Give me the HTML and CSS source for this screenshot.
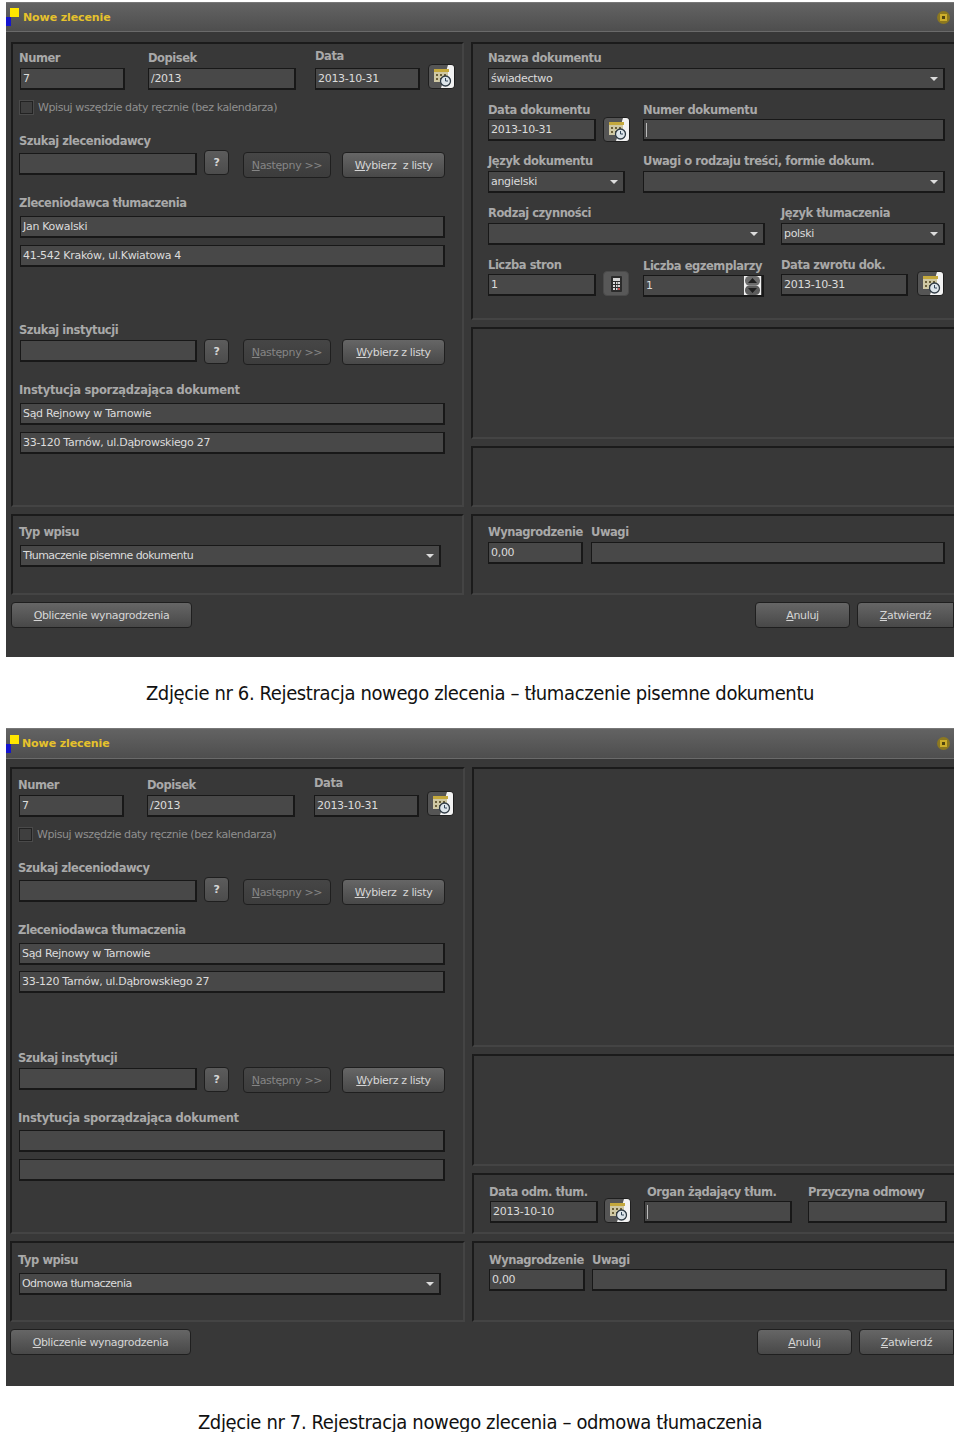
FILE: index.html
```html
<!DOCTYPE html>
<html lang="pl">
<head>
    <meta charset="UTF-8">
    <title>Rejestracja nowego zlecenia</title>
    <link rel="stylesheet" href="styles.css">
</head>
<body>
    <svg class="icon-defs" width="0" height="0">
        <symbol id="icon-calendar" viewBox="0 0 27 25">
            <path d="M20 1h6v23h-13z" fill="#f2f2f2"/>
            <rect x="6" y="5" width="15" height="3" fill="#c4a83c"/>
            <rect x="6" y="8" width="14" height="10" fill="#cfc8a4"/>
            <path d="M8 10h2v2H8zM12 10h2v2h-2zM16 10h2v2h-2zM8 14h2v2H8zM12 14h2v2h-2z" fill="#6a5f38"/>
            <circle cx="17.500" cy="17" r="5" fill="#dde5ea" stroke="#2e3a44" stroke-width="1.300"/>
            <path d="M17.500 14v3h2.500" fill="none" stroke="#33475a"/>
        </symbol>
    </svg>

    <!-- Zdjecie 6 -->
    <div class="window">
        <div class="title-bar">
            <span class="logo"></span>
            <span class="title-text">Nowe zlecenie</span>
            <span class="title-pin"></span>
        </div>
        <div class="panels">
            <div class="panel panel-left">
                <div class="row row-end">
                    <div class="field w-105">
                        <div class="label shift-left">Numer</div>
                        <div class="input">7</div>
                    </div>
                    <div class="field w-148 ml-23">
                        <div class="label">Dopisek</div>
                        <div class="input">/2013</div>
                    </div>
                    <div class="field w-105 ml-19">
                        <div class="label label-high">Data</div>
                        <div class="input">2013-10-31</div>
                    </div>
                    <button class="icon-btn ml-8 mb-1"><svg width="27" height="25"><use href="#icon-calendar"/></svg></button>
                </div>
                <div class="check-row">
                    <span class="checkbox"></span>
                    <span>Wpisuj wszędzie daty ręcznie (bez kalendarza)</span>
                </div>
                <div class="row row-end mt-19 shift-left">
                    <div class="field w-178 mb-3">
                        <div class="label gap-4">Szukaj zleceniodawcy</div>
                        <div class="input"></div>
                    </div>
                    <button class="btn-q ml-7 mb-3">?</button>
                    <button class="btn btn-off w-88 ml-14"><span><u>N</u>astępny &gt;&gt;</span></button>
                    <button class="btn w-103 ml-11"><span><u>W</u>ybierz&nbsp; z listy</span></button>
                </div>
                <div class="label mt-17 shift-left gap-5">Zleceniodawca tłumaczenia</div>
                <div class="input w-425">Jan Kowalski</div>
                <div class="input w-425 mt-7">41-542 Kraków, ul.Kwiatowa 4</div>
                <div class="row row-end mt-55">
                    <div class="field w-177 mb-3">
                        <div class="label shift-left">Szukaj instytucji</div>
                        <div class="input"></div>
                    </div>
                    <button class="btn-q ml-7 mb-1">?</button>
                    <button class="btn btn-off w-88 ml-14"><span><u>N</u>astępny &gt;&gt;</span></button>
                    <button class="btn w-103 ml-11"><span><u>W</u>ybierz z listy</span></button>
                </div>
                <div class="label label-wide mt-17 gap-5 shift-left">Instytucja sporządzająca dokument</div>
                <div class="input w-425">Sąd Rejnowy w Tarnowie</div>
                <div class="input w-425 mt-7">33-120 Tarnów, ul.Dąbrowskiego 27</div>
            </div>
            <div class="panel-stack">
                <div class="panel panel-doc">
                    <div class="field">
                        <div class="label">Nazwa dokumentu</div>
                        <div class="input select w-457">świadectwo</div>
                    </div>
                    <div class="row row-end mt-12">
                        <div class="field w-108 mb-1">
                            <div class="label gap-1">Data dokumentu</div>
                            <div class="input">2013-10-31</div>
                        </div>
                        <button class="icon-btn ml-7"><svg width="27" height="25"><use href="#icon-calendar"/></svg></button>
                        <div class="field w-302 ml-13 mb-1">
                            <div class="label gap-1">Numer dokumentu</div>
                            <div class="input"><span class="caret"></span></div>
                        </div>
                    </div>
                    <div class="row mt-11">
                        <div class="field w-137">
                            <div class="label">Język dokumentu</div>
                            <div class="input select">angielski</div>
                        </div>
                        <div class="field w-302 ml-18">
                            <div class="label">Uwagi o rodzaju treści, formie dokum.</div>
                            <div class="input select"></div>
                        </div>
                    </div>
                    <div class="row mt-12">
                        <div class="field w-277">
                            <div class="label">Rodzaj czynności</div>
                            <div class="input select"></div>
                        </div>
                        <div class="field w-164 ml-16">
                            <div class="label">Język tłumaczenia</div>
                            <div class="input select">polski</div>
                        </div>
                    </div>
                    <div class="row row-end mt-12">
                        <div class="field w-108">
                            <div class="label gap-1">Liczba stron</div>
                            <div class="input">1</div>
                        </div>
                        <button class="icon-btn icon-btn-flat ml-7 w-26">
                            <svg width="26" height="25" viewBox="0 0 26 25">
                                <rect x="8" y="5" width="11" height="16" rx="1" fill="#2b2b2b"/>
                                <rect x="10" y="7" width="7" height="3" fill="#d4d4d4"/>
                                <path d="M10 11h2v2h-2zM13 11h1.500v2H13zM15 11h2v2h-2zM10 14h2v2h-2zM13 14h1.500v2H13zM15 14h2v2h-2z" fill="#d8d8d8"/>
                                <path d="M10 17h2v2h-2zM13 17h1.500v2H13z" fill="#d8d8d8"/>
                                <path d="M15 17h2v2h-2z" fill="#c04848"/>
                            </svg>
                        </button>
                        <div class="field w-121 ml-14">
                            <div class="label gap-1">Liczba egzemplarzy</div>
                            <div class="input input-low spinner">1
                                <svg class="spin-icon" width="17" height="19" viewBox="0 0 17 19">
                                    <rect width="17" height="19" fill="#f0f0f0"/>
                                    <rect x="1" y="0" width="15" height="9.500" rx="4.500" fill="#6c6c6c"/>
                                    <rect x="1" y="9.500" width="15" height="9.500" rx="4.500" fill="#5c5c5c"/>
                                    <path d="M8.500 2l4.500 5H4zM8.500 17l4.500-5H4z" fill="#1e1e1e"/>
                                </svg>
                            </div>
                        </div>
                        <div class="field w-127 ml-17">
                            <div class="label gap-1">Data zwrotu dok.</div>
                            <div class="input">2013-10-31</div>
                        </div>
                        <button class="icon-btn ml-9"><svg width="27" height="25"><use href="#icon-calendar"/></svg></button>
                    </div>
                </div>
                <div class="panel panel-mid"></div>
                <div class="panel panel-low"></div>
            </div>
        </div>
        <div class="panels panels-bottom">
            <div class="panel panel-left panel-type">
                <div class="label gap-5 shift-left">Typ wpisu</div>
                <div class="input select select-tight w-421">Tłumaczenie pisemne dokumentu</div>
            </div>
            <div class="panel panel-pay">
                <div class="row">
                    <div class="field w-95">
                        <div class="label">Wynagrodzenie</div>
                        <div class="input">0,00</div>
                    </div>
                    <div class="field w-354 ml-8">
                        <div class="label">Uwagi</div>
                        <div class="input"></div>
                    </div>
                </div>
            </div>
        </div>
        <div class="actions">
            <button class="btn w-181"><span><u>O</u>bliczenie wynagrodzenia</span></button>
            <button class="btn w-95 push-right"><span><u>A</u>nuluj</span></button>
            <button class="btn btn-clip w-97 ml-7"><span><u>Z</u>atwierdź</span></button>
        </div>
    </div>
    <p class="caption">Zdjęcie nr 6. Rejestracja nowego zlecenia – tłumaczenie pisemne dokumentu</p>

    <!-- Zdjecie 7 -->
    <div class="window window-second">
        <div class="title-bar">
            <span class="logo"></span>
            <span class="title-text">Nowe zlecenie</span>
            <span class="title-pin"></span>
        </div>
        <div class="panels">
            <div class="panel panel-left">
                <div class="row row-end">
                    <div class="field w-105">
                        <div class="label shift-left">Numer</div>
                        <div class="input">7</div>
                    </div>
                    <div class="field w-148 ml-23">
                        <div class="label">Dopisek</div>
                        <div class="input">/2013</div>
                    </div>
                    <div class="field w-105 ml-19">
                        <div class="label label-high">Data</div>
                        <div class="input">2013-10-31</div>
                    </div>
                    <button class="icon-btn ml-8 mb-1"><svg width="27" height="25"><use href="#icon-calendar"/></svg></button>
                </div>
                <div class="check-row">
                    <span class="checkbox"></span>
                    <span>Wpisuj wszędzie daty ręcznie (bez kalendarza)</span>
                </div>
                <div class="row row-end mt-19">
                    <div class="field w-178 mb-3">
                        <div class="label gap-4 shift-left">Szukaj zleceniodawcy</div>
                        <div class="input"></div>
                    </div>
                    <button class="btn-q ml-7 mb-3">?</button>
                    <button class="btn btn-off w-88 ml-14"><span><u>N</u>astępny &gt;&gt;</span></button>
                    <button class="btn w-103 ml-11"><span><u>W</u>ybierz&nbsp; z listy</span></button>
                </div>
                <div class="label mt-17 gap-5 shift-left">Zleceniodawca tłumaczenia</div>
                <div class="input w-426">Sąd Rejnowy w Tarnowie</div>
                <div class="input w-426 mt-6">33-120 Tarnów, ul.Dąbrowskiego 27</div>
                <div class="row row-end mt-57">
                    <div class="field w-178 mb-3">
                        <div class="label shift-left">Szukaj instytucji</div>
                        <div class="input"></div>
                    </div>
                    <button class="btn-q ml-7 mb-1">?</button>
                    <button class="btn btn-off w-88 ml-14"><span><u>N</u>astępny &gt;&gt;</span></button>
                    <button class="btn w-103 ml-11"><span><u>W</u>ybierz z listy</span></button>
                </div>
                <div class="label label-wide mt-17 gap-4 shift-left">Instytucja sporządzająca dokument</div>
                <div class="input w-426"></div>
                <div class="input w-426 mt-7"></div>
            </div>
            <div class="panel-stack">
                <div class="panel panel-doc"></div>
                <div class="panel panel-mid"></div>
                <div class="panel panel-low panel-refusal">
                    <div class="row row-end">
                        <div class="field w-108 mb-0">
                            <div class="label gap-1 shift-left">Data odm. tłum.</div>
                            <div class="input">2013-10-10</div>
                        </div>
                        <button class="icon-btn ml-6"><svg width="27" height="25"><use href="#icon-calendar"/></svg></button>
                        <div class="field w-148 ml-13">
                            <div class="label gap-1 label-inset">Organ żądający tłum.</div>
                            <div class="input"><span class="caret"></span></div>
                        </div>
                        <div class="field w-139 ml-16">
                            <div class="label gap-1">Przyczyna odmowy</div>
                            <div class="input"></div>
                        </div>
                    </div>
                </div>
            </div>
        </div>
        <div class="panels panels-bottom">
            <div class="panel panel-left panel-type">
                <div class="label gap-5 shift-left">Typ wpisu</div>
                <div class="input select select-tight w-422">Odmowa tłumaczenia</div>
            </div>
            <div class="panel panel-pay">
                <div class="row">
                    <div class="field w-96">
                        <div class="label gap-1">Wynagrodzenie</div>
                        <div class="input">0,00</div>
                    </div>
                    <div class="field w-355 ml-7">
                        <div class="label gap-1">Uwagi</div>
                        <div class="input"></div>
                    </div>
                </div>
            </div>
        </div>
        <div class="actions">
            <button class="btn w-181"><span><u>O</u>bliczenie wynagrodzenia</span></button>
            <button class="btn w-95 push-right"><span><u>A</u>nuluj</span></button>
            <button class="btn btn-clip w-95 ml-7"><span><u>Z</u>atwierdź</span></button>
        </div>
    </div>
    <p class="caption caption-second">Zdjęcie nr 7. Rejestracja nowego zlecenia – odmowa tłumaczenia</p>
</body>
</html>
```

FILE: styles.css
```css
body {
    margin: 0;
    padding: 2px 0 0 6px;
    background-color: #fff;
    font-family: "DejaVu Sans", sans-serif;
    overflow-x: hidden;
}

.icon-defs {
    position: absolute;
}

.window {
    width: 948px;
    height: 655px;
    background-color: #383838;
    overflow: hidden;
    box-sizing: border-box;
}

.window-second {
    height: 658px;
}

.title-bar {
    display: flex;
    align-items: center;
    height: 30px;
    box-sizing: border-box;
    padding-left: 17px;
    background: linear-gradient(#636363, #4e4e4e);
    border-top: 1px solid #777;
    border-bottom: 1px solid #6a6a6a;
}

.window-second .title-bar {
    height: 31px;
    padding-left: 16px;
}

.logo {
    position: absolute;
    left: 6px;
    width: 5px;
    height: 9px;
    margin-top: 9px;
    background-color: #1414d0;
}

.logo::after {
    content: "";
    position: absolute;
    left: 4px;
    top: -9px;
    width: 9px;
    height: 9px;
    background-color: #ffe600;
}

.title-text {
    color: #e6c22c;
    font-size: 11px;
    font-weight: bold;
    letter-spacing: -0.1px;
}

.title-pin {
    display: flex;
    align-items: center;
    justify-content: center;
    width: 13px;
    height: 13px;
    margin-left: auto;
    margin-right: 4px;
    border-radius: 50%;
    background-color: #8c7820;
}

.title-pin::after {
    content: "";
    width: 3px;
    height: 3px;
    border: 2px solid #cdae2c;
    background-color: #4f4410;
}

.panels {
    display: flex;
    gap: 7px;
    margin: 10px 0 0 5px;
}

.window-second .panels {
    margin: 8px 0 0 4px;
}

.window .panels-bottom,
.window-second .panels-bottom {
    margin-top: 7px;
}

.panel {
    flex: none;
    box-sizing: border-box;
    border: 2px solid #1b1b1b;
    border-right-color: #444;
    border-bottom-color: #444;
}

.panel-left {
    width: 453px;
    height: 465px;
    padding: 4px 0 0 7px;
}

.window-second .panel-left {
    width: 455px;
    height: 467px;
    padding-top: 6px;
}

.panel-stack {
    flex: none;
    display: flex;
    flex-direction: column;
    gap: 7px;
    width: 490px;
}

.panel-doc {
    height: 278px;
    padding: 6px 0 0 15px;
    border-right: 0;
}

.window-second .panel-doc {
    height: 280px;
}

.panel-mid {
    height: 112px;
    border-right: 0;
}

.panel-low {
    height: 61px;
    border-right: 0;
}

.panel-refusal {
    padding: 9px 0 0 16px;
}

.panels-bottom .panel-type {
    height: 81px;
    padding: 8px 0 0 7px;
}

.window-second .panels-bottom .panel-type {
    padding-top: 9px;
}

.panel-pay {
    width: 490px;
    height: 81px;
    padding: 8px 0 0 15px;
    border-right: 0;
}

.window-second .panel-pay {
    padding-top: 9px;
}

.row {
    display: flex;
}

.row-end {
    align-items: flex-end;
}

.field {
    flex: none;
}

.label {
    height: 16px;
    line-height: 16px;
    margin-bottom: 2px;
    color: #a9a9a9;
    font-size: 11.5px;
    font-weight: bold;
    letter-spacing: -0.45px;
    white-space: nowrap;
}

.label-high {
    margin-bottom: 4px;
}

.label-wide {
    letter-spacing: -0.28px;
}

.label-inset {
    padding-left: 3px;
}

.shift-left {
    margin-left: -1px;
}

.input {
    position: relative;
    height: 22px;
    box-sizing: border-box;
    padding-left: 2px;
    line-height: 19px;
    background-color: #484848;
    border: 1px solid #181818;
    border-width: 1px 2px 2px 1px;
    color: #dcdcdc;
    font-size: 11px;
    letter-spacing: -0.3px;
    white-space: nowrap;
}

.input-low {
    margin-top: 1px;
    margin-bottom: -1px;
}

.select::after {
    content: "";
    position: absolute;
    right: 5px;
    top: 8px;
    border-left: 4px solid transparent;
    border-right: 4px solid transparent;
    border-top: 4px solid #ddd;
}

.select-tight {
    letter-spacing: -0.55px;
}

.caret {
    display: inline-block;
    width: 1px;
    height: 14px;
    margin-top: 3px;
    background-color: #bbb;
}

.spin-icon {
    position: absolute;
    right: 1px;
    top: 0;
}

.check-row {
    display: flex;
    align-items: center;
    gap: 5px;
    height: 14px;
    margin-top: 10px;
    color: #8f8f8f;
    font-size: 11px;
    letter-spacing: -0.4px;
}

.checkbox {
    width: 11px;
    height: 11px;
    border: 1px solid #222;
    outline: 1px solid #4a4a4a;
    background-color: #3f3f3f;
}

.btn,
.btn-q,
.icon-btn {
    flex: none;
    box-sizing: border-box;
    padding: 0;
    background: linear-gradient(#666, #484848);
    border: 1px solid #1f1f1f;
    border-radius: 4px;
    color: #d6d6d6;
    font-family: "DejaVu Sans", sans-serif;
    font-size: 11px;
    letter-spacing: -0.35px;
}

.btn {
    height: 26px;
}

.btn-off {
    background: linear-gradient(#464646, #3c3c3c);
    color: #858585;
}

.btn-q {
    width: 25px;
    height: 25px;
    background: linear-gradient(#5c5c5c, #4c4c4c);
    font-weight: bold;
}

.icon-btn {
    display: block;
    width: 27px;
    height: 25px;
    overflow: hidden;
    background: #555;
}

.icon-btn-flat {
    background: #585858;
    border-color: #4a4a4a;
}

.icon-btn svg {
    display: block;
    margin: -1px;
}

.btn-clip {
    border-radius: 4px 0 0 4px;
}

.actions {
    display: flex;
    margin: 7px 0 0 5px;
}

.window-second .actions {
    margin-left: 4px;
}

.push-right {
    margin-left: auto;
}

.caption {
    margin: 26px 0 0 -6px;
    height: 20px;
    line-height: 20px;
    text-align: center;
    color: #111;
    font-size: 20px;
    font-stretch: condensed;
    letter-spacing: -0.37px;
}

.caption-second {
    margin-top: 26px;
}

.caption + .window {
    margin-top: 25px;
}

/* szerokosci pol */
.w-26 { width: 26px; }
.w-88 { width: 88px; }
.w-95 { width: 95px; }
.w-96 { width: 96px; }
.w-97 { width: 97px; }
.w-103 { width: 103px; }
.w-105 { width: 105px; }
.w-108 { width: 108px; }
.w-121 { width: 121px; }
.w-127 { width: 127px; }
.w-137 { width: 137px; }
.w-139 { width: 139px; }
.w-148 { width: 148px; }
.w-164 { width: 164px; }
.w-177 { width: 177px; }
.w-178 { width: 178px; }
.w-181 { width: 181px; }
.w-277 { width: 277px; }
.w-302 { width: 302px; }
.w-354 { width: 354px; }
.w-355 { width: 355px; }
.w-421 { width: 421px; }
.w-422 { width: 422px; }
.w-425 { width: 425px; }
.w-426 { width: 426px; }
.w-457 { width: 457px; }

/* odstepy */
.ml-6 { margin-left: 6px; }
.ml-7 { margin-left: 7px; }
.ml-8 { margin-left: 8px; }
.ml-9 { margin-left: 9px; }
.ml-11 { margin-left: 11px; }
.ml-13 { margin-left: 13px; }
.ml-14 { margin-left: 14px; }
.ml-16 { margin-left: 16px; }
.ml-17 { margin-left: 17px; }
.ml-18 { margin-left: 18px; }
.ml-19 { margin-left: 19px; }
.ml-23 { margin-left: 23px; }
.mt-6 { margin-top: 6px; }
.mt-7 { margin-top: 7px; }
.mt-11 { margin-top: 11px; }
.mt-12 { margin-top: 12px; }
.mt-17 { margin-top: 17px; }
.mt-19 { margin-top: 19px; }
.mt-55 { margin-top: 55px; }
.mt-57 { margin-top: 57px; }
.mb-0 { margin-bottom: 0; }
.mb-1 { margin-bottom: 1px; }
.mb-3 { margin-bottom: 3px; }
.gap-1 { margin-bottom: 1px; }
.gap-4 { margin-bottom: 4px; }
.gap-5 { margin-bottom: 5px; }
```
